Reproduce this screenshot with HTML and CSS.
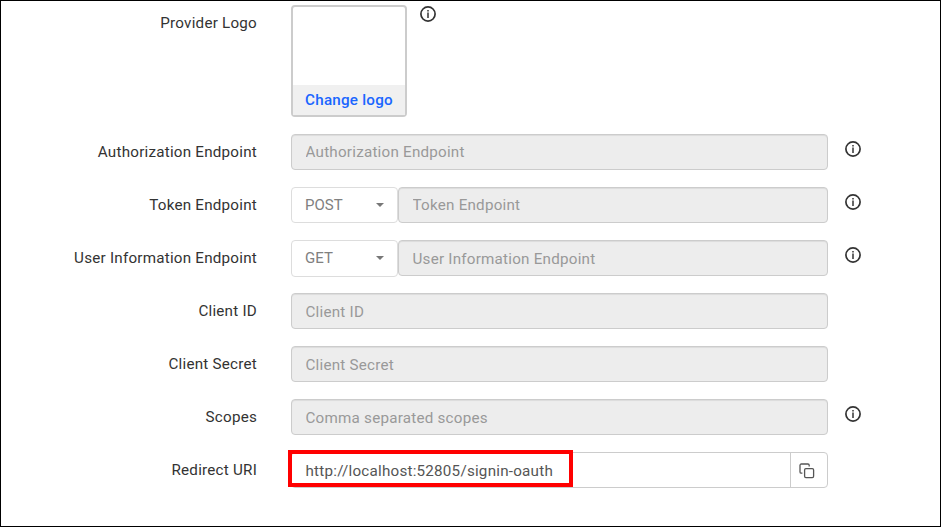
FILE: index.html
```html
<!DOCTYPE html>
<html lang="en">
<head>
<meta charset="utf-8">
<title>OAuth Provider</title>
<link rel="stylesheet" href="styles.css">
</head>
<body>
<svg class="sprite" aria-hidden="true">
  <symbol id="info" viewBox="0 0 16 16">
    <circle cx="8" cy="8" r="7.1" fill="none" stroke="currentColor" stroke-width="1.7"/>
    <path d="M8 6.6v5.4" stroke="currentColor" stroke-width="1.5"/>
    <path d="M8 4v1.5" stroke="currentColor" stroke-width="1.5"/>
  </symbol>
</svg>
<form class="form">
  <div class="row row-logo">
    <span class="label">Provider Logo</span>
    <div class="logo"><span class="logo-change">Change logo</span></div>
    <svg class="info"><use href="#info"/></svg>
  </div>
  <div class="row">
    <label class="label">Authorization Endpoint</label>
    <div class="control"><input class="input" placeholder="Authorization Endpoint" disabled></div>
    <svg class="info"><use href="#info"/></svg>
  </div>
  <div class="row">
    <label class="label">Token Endpoint</label>
    <div class="control"><div class="select"><span>POST</span><i class="caret"></i></div><input class="input" placeholder="Token Endpoint" disabled></div>
    <svg class="info"><use href="#info"/></svg>
  </div>
  <div class="row">
    <label class="label">User Information Endpoint</label>
    <div class="control"><div class="select select-tall"><span>GET</span><i class="caret"></i></div><input class="input input-low" placeholder="User Information Endpoint" disabled></div>
    <svg class="info"><use href="#info"/></svg>
  </div>
  <div class="row">
    <label class="label">Client ID</label>
    <div class="control"><input class="input input-low" placeholder="Client ID" disabled></div>
  </div>
  <div class="row">
    <label class="label">Client Secret</label>
    <div class="control"><input class="input input-low" placeholder="Client Secret" disabled></div>
  </div>
  <div class="row">
    <label class="label">Scopes</label>
    <div class="control"><input class="input input-low" placeholder="Comma separated scopes" disabled></div>
    <svg class="info"><use href="#info"/></svg>
  </div>
  <div class="row">
    <label class="label">Redirect URI</label>
    <div class="control uri">
      <span class="uri-text">http://localhost:52805/signin-oauth</span>
      <span class="copy">
        <svg width="16" height="16" viewBox="0 0 16 16" fill="none" stroke="currentColor" stroke-width="1.3">
          <rect x="5.6" y="5.6" width="9" height="9" rx="1.3"/>
          <path d="M3.4 10.2H2.3A1.3 1.3 0 0 1 1 8.9V2.3A1.3 1.3 0 0 1 2.3 1H8.9A1.3 1.3 0 0 1 10.2 2.3V3.4"/>
        </svg>
      </span>
      <span class="highlight"></span>
    </div>
  </div>
</form>
</body>
</html>
```
FILE: styles.css
```css
* { box-sizing: border-box; }
body {
  margin: 0;
  height: 527px;
  border: 1px solid #000;
  background: #fff;
  font: 15.2px/20px Roboto, sans-serif;
  letter-spacing: 0.23px;
  color: #333;
}
.sprite { position: absolute; width: 0; height: 0; }
.form {
  display: flex;
  flex-direction: column;
  gap: 17px;
  padding-top: 4px;
}
.row { display: flex; height: 36px; }
.row-logo { height: 112px; }
.label {
  width: 256px;
  margin-right: 34px;
  padding-top: 8px;
  text-align: right;
}
.logo {
  display: flex;
  align-items: flex-end;
  width: 116px;
  height: 112px;
  border: 2px solid #ccc;
  border-radius: 4px;
}
.logo-change {
  flex: 1;
  height: 30px;
  background: #f0f0f0;
  color: #1a66ff;
  font-weight: 500;
  line-height: 30px;
  text-align: center;
}
.control { position: relative; display: flex; width: 537px; }
.input {
  flex: 1;
  min-width: 0;
  height: 36px;
  margin: 0;
  padding: 0 13.5px;
  border: 1px solid #ccc;
  border-radius: 4px;
  background: #ededed;
  box-shadow: inset 0 1px 1px rgba(0, 0, 0, 0.075);
  font: inherit;
  letter-spacing: inherit;
}
.input-low { padding-top: 2px; }
.input::placeholder { color: #999; opacity: 1; }
.select {
  display: flex;
  align-items: center;
  justify-content: space-between;
  width: 107px;
  height: 36px;
  padding: 0 13px;
  border: 1px solid #ddd;
  border-radius: 4px;
  color: #808080;
  font-size: 15px;
  letter-spacing: 0;
}
.select-tall { height: 37px; padding-bottom: 1px; }
.caret {
  border: 4px solid transparent;
  border-top-color: #777;
  border-bottom: 0;
}
.info {
  width: 16px;
  height: 16px;
  margin: 7px 0 0 17px;
  color: #333;
}
.row-logo .info { margin: 1px 0 0 13px; }
.uri {
  border: 1px solid #ccc;
  border-radius: 4px;
  color: #555;
}
.uri-text { flex: 1; padding: 8px 13.5px; }
.copy {
  display: flex;
  width: 37px;
  padding: 10px 0 0 8px;
  border-left: 1px solid #ccc;
}
.highlight {
  position: absolute;
  top: -3px;
  left: -4px;
  width: 285px;
  height: 37px;
  border: 4px solid #f00;
}
```
